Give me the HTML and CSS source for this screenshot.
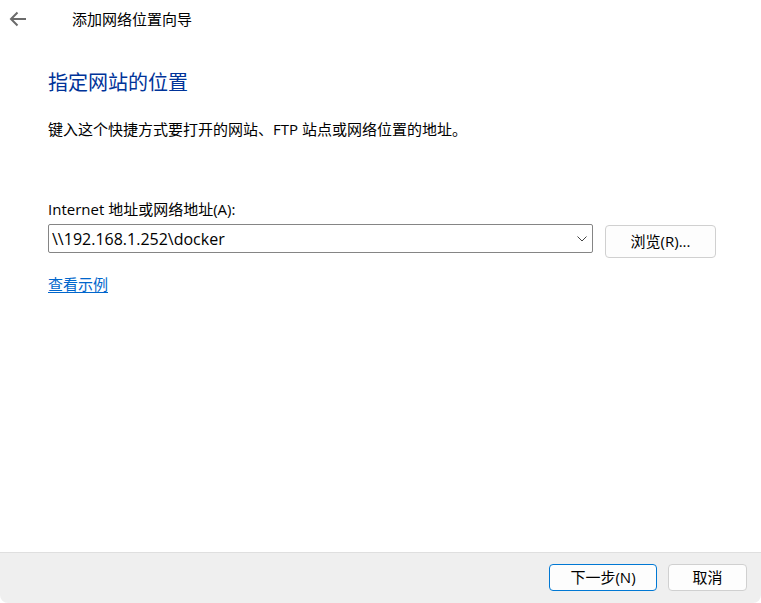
FILE: index.html
```
<!DOCTYPE html>
<html lang="zh-CN">
<head>
<meta charset="utf-8">
<title>添加网络位置向导</title>
<link rel="stylesheet" href="styles.css">
</head>

<body>
<form class="wizard" onsubmit="return false">
	<div class="title">
    	<button class="back" type="button" aria-label="返回">
        	<svg width="18" height="16" viewBox="0 0 18 16"><path d="M8.5 1.5L2 8l6.5 6.5M2 8h15" fill="none" stroke="#6b6b6b" stroke-width="2"/></svg>
        </button>
        <span>添加网络位置向导</span>
    </div>
    <div class="main">
    	<h1>指定网站的位置</h1>
        <p>键入这个快捷方式要打开的网站、FTP 站点或网络位置的地址。</p>
        <label for="address">Internet 地址或网络地址(A):</label>
        <div class="row">
        	<div class="combo">
            	<input id="address" type="text" value="\\192.168.1.252\docker">
                <button type="button" aria-label="展开">
                	<svg width="12" height="8" viewBox="0 0 12 8"><path d="M1.5 1.5L6 6l4.5-4.5" fill="none" stroke="#444"/></svg>
                </button>
            </div>
            <button class="btn browse" type="button">浏览(R)...</button>
        </div>
        <a href="#">查看示例</a>
    </div>
    <div class="footer">
    	<button class="btn next" type="submit">下一步(N)</button>
        <button class="btn cancel" type="button">取消</button>
    </div>
</form>
</body>
</html>
```

FILE: styles.css
```
body,h1,p{ margin:0; padding:0;}
*{ box-sizing:border-box;}
html{ background:#fff;}
body,input,button{ font-family:"Open Sans","Noto Sans CJK SC",sans-serif; font-size:15px; color:#000;}
button{ padding:0;}
svg{ display:block;}
.wizard{ display:flex; flex-direction:column; min-height:100vh; background:#fff; border-radius:0 0 8px 8px; overflow:hidden;}
.title{ display:flex; align-items:center; height:38px; padding-left:9px; line-height:20px;}
.back{ border:0; background:none; margin-right:45px;}
.main{ flex:1; padding:31px 45px 0 48px; line-height:24px;}
.main h1{ font-size:20px; line-height:28px; font-weight:normal; color:#003399;}
.main p{ margin:20px 0 56px;}
.main label{ display:block; line-height:24px; margin-bottom:3px;}
.row{ display:flex; align-items:flex-start; gap:12px; margin-bottom:14px;}
.combo{ display:flex; flex:1; height:29px; border:1px solid #858585; border-radius:2px;}
.combo input{ flex:1; min-width:0; border:0; outline:0; padding:0 3px; font-size:16px; background:none;}
.combo button{ width:20px; border:0; background:none; display:flex; align-items:center; justify-content:center;}
.main a{ color:#0066cc; text-underline-offset:2px;}
.btn{ height:27px; line-height:20px; padding-bottom:2px; background:#fdfdfd; border:1px solid #d0d0d0; border-radius:4px;}
.browse{ width:111px; height:33px; margin-top:1px;}
.footer{ display:flex; justify-content:flex-end; gap:11px; height:51px; padding:11px 14px 0; background:#efefef; border-top:1px solid #dfdfdf;}
.next{ width:108px; border-color:#0078d4;}
.cancel{ width:79px;}
```
